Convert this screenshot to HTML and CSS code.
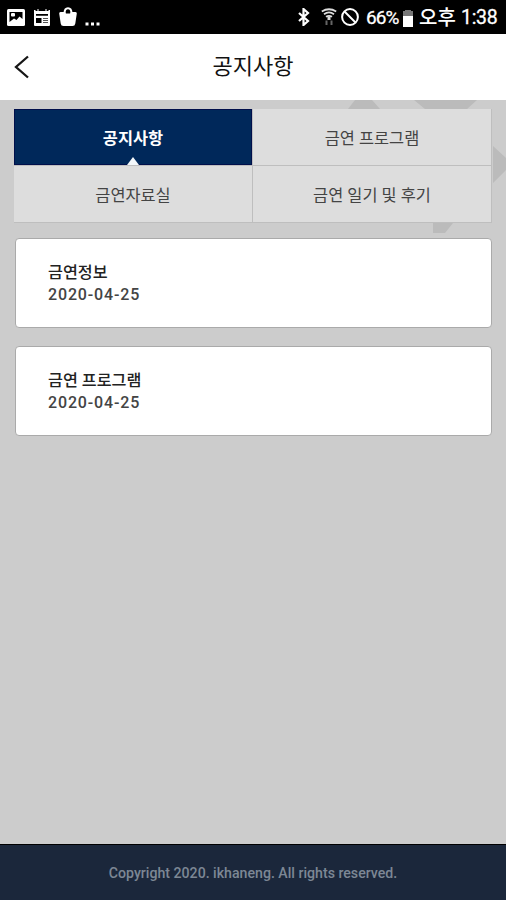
FILE: index.html
```html
<!DOCTYPE html>
<html lang="ko">
<head>
<meta charset="utf-8">
<title>공지사항</title>
<link rel="stylesheet" href="styles.css">
</head>
<body>
<div class="screen">
  <div class="status">
    <div class="status-left">
      <svg width="18" height="17" viewBox="0 0 18 17"><rect width="18" height="17" rx="1.500" fill="#fff"/><path d="M2.500 3h13v7l-3-2.500L9.500 11 7 9.500 2.500 13z" fill="#000"/><rect x="4" y="4" width="4" height="3.500" rx="1" fill="#fff"/></svg>
      <svg width="18" height="17" viewBox="0 0 18 17"><path d="M1 1h1.500v1h2V0h1v2h7V0h1v2h2V1H17v15q0 1-1 1H2q-1 0-1-1z" fill="#fff"/><path d="M3 5h12v1.700H3zM3 9h5.500v5H3z" fill="#000"/><path d="M10 9h5v1h-5zM10 11h5v1h-5zM10 13h5v1h-5z" fill="#555"/></svg>
      <svg class="bag" width="18" height="19" viewBox="0 0 18 19"><path d="M5.500 6.500Q5.500 1.200 9 1.200t3.500 5.300" fill="none" stroke="#fff" stroke-width="2"/><path d="M1.500 5H6l1 1.500h4L12 5h4.500q1.500 0 1.300 1.500l-1.500 10Q16 19 13.500 19h-9Q2 19 1.700 16.500l-1.500-10Q0 5 1.500 5z" fill="#fff"/></svg>
      <svg class="more" width="16" height="4" viewBox="0 0 16 4"><path d="M.5.500h3v3h-3zM6 .5h3v3H6zM11.500.500h3v3h-3z" fill="#fff"/></svg>
    </div>
    <div class="status-right">
      <svg width="14" height="18" viewBox="0 0 14 18" fill="none" stroke="#fff" stroke-width="2.200"><path d="M2 5l9 8-4.500 4V1L11 5l-9 8"/></svg>
      <svg class="wifi" width="16" height="18" viewBox="0 0 16 18" fill="none" stroke="#ddd" stroke-width="1.800"><path d="M.8 3.500Q8-1 15.200 3.500M3 6.200q5-3.500 10 0M5 8.800Q8 6.800 11 8.800"/><path d="M8 12V8.500" stroke-width="3"/><path d="M5.500 12.500V17M10.500 12.500V17" stroke="#666" stroke-width="2"/></svg>
      <svg class="block" width="18" height="18" viewBox="0 0 18 18" fill="none" stroke="#fff" stroke-width="2"><circle cx="9" cy="9" r="7.900"/><path d="M3.500 3.500l11 11"/></svg>
      <span class="percent">66%</span>
      <svg class="battery" width="10" height="17" viewBox="0 0 10 17"><path d="M2 0h6v1h2v5H0V1h2z" fill="#777"/><path d="M0 6h10v11H0z" fill="#fff"/></svg>
      <span class="meridiem">오후</span>
      <span class="clock">1:38</span>
    </div>
  </div>
  <header class="header">
    <svg width="16" height="24" viewBox="0 0 16 24" fill="none" stroke="#161616" stroke-width="2.300"><path d="M14 1.500L2 12l12 10.500"/></svg>
    <h1>공지사항</h1>
  </header>
  <main class="content">
    <svg class="pattern" width="186" height="140" viewBox="0 0 186 140" fill="#bbb"><path d="M28 9L35 0h17l8 9zM94 0h63l-10 9h-42zM173 46l13 12v12l-13 13zM113 123h20l-8 10h-12z"/></svg>
    <nav class="tabs">
      <a class="tab active">공지사항</a>
      <a class="tab">금연 프로그램</a>
      <a class="tab">금연자료실</a>
      <a class="tab">금연 일기 및 후기</a>
    </nav>
    <article class="card"><h2>금연정보</h2><time>2020-04-25</time></article>
    <article class="card"><h2>금연 프로그램</h2><time>2020-04-25</time></article>
  </main>
  <footer class="footer">Copyright 2020. ikhaneng. All rights reserved.</footer>
</div>
</body>
</html>
```

FILE: styles.css
```css
* { box-sizing: border-box; }
body { margin: 0; font-family: Roboto, "Noto Sans CJK KR", sans-serif; }
svg { display: block; flex: none; }
.screen { display: flex; flex-direction: column; height: 900px; background: #ccc; overflow: hidden; }
.status { flex: none; height: 34px; padding: 0 8px 0 7px; display: flex; justify-content: space-between; align-items: center; background: #000; color: #fff; }
.status-left, .status-right { display: flex; align-items: center; height: 34px; }
.status-left { gap: 8px; }
.more { margin-top: 13px; }
.bag { margin-top: -1px; }
.status-right { line-height: 34px; white-space: nowrap; }
.status-right span { padding-top: 2px; }
.wifi { margin-left: 10px; }
.block { margin-left: 4px; }
.percent { width: 34px; margin-left: 7px; font-size: 19px; letter-spacing: -.9px; -webkit-text-stroke: .3px #fff; }
.battery { margin-left: 3px; margin-top: 2px; }
.meridiem { width: 37px; margin-left: 6px; font-size: 20px; font-weight: 500; }
.clock { width: 37px; margin-left: 5px; font-size: 19.500px; letter-spacing: -.3px; -webkit-text-stroke: .3px #fff; }
.header { flex: none; height: 66px; display: grid; grid-template-columns: 40px 1fr 40px; align-items: center; background: #fff; }
.header svg { margin-left: 14px; }
.header h1 { margin: 0; font-size: 22px; line-height: 30px; font-weight: 400; text-align: center; color: #111; }
.content { flex: 1; position: relative; padding: 9px 14px 0; }
.pattern { position: absolute; top: 0; right: 0; }
.tabs { position: relative; display: grid; grid-template-columns: 238px 238px; grid-template-rows: 56px 56px; gap: 1px; height: 114px; padding-bottom: 1px; background: #bebebe; }
.tab { position: relative; display: flex; align-items: center; justify-content: center; background: #ddd; color: #444; font-size: 16.400px; }
.active { background: #00285a; border: 1px solid #000f4b; color: #fff; font-weight: 700; }
.active::after { content: ""; position: absolute; bottom: -1px; left: 50%; margin-left: -6px; border: 6px solid transparent; border-top: 0; border-bottom: 8px solid #f3f7fa; }
.card { height: 90px; margin: 15px 0 18px 1px; padding: 22px 32px; background: #fff; border: 1px solid #aaa; border-radius: 4px; }
.card h2 { margin: 0; font-size: 16.200px; line-height: 23px; font-weight: 500; color: #222; }
.card time { display: block; font-size: 16px; line-height: 22px; font-weight: 500; letter-spacing: .85px; color: #444; }
.card + .card { margin-top: 18px; }
.footer { flex: none; height: 56px; border-top: 1px solid #000; background: #1b273b; color: #7d8795; font-size: 14.150px; line-height: 56px; font-weight: 500; text-align: center; white-space: nowrap; }
```
